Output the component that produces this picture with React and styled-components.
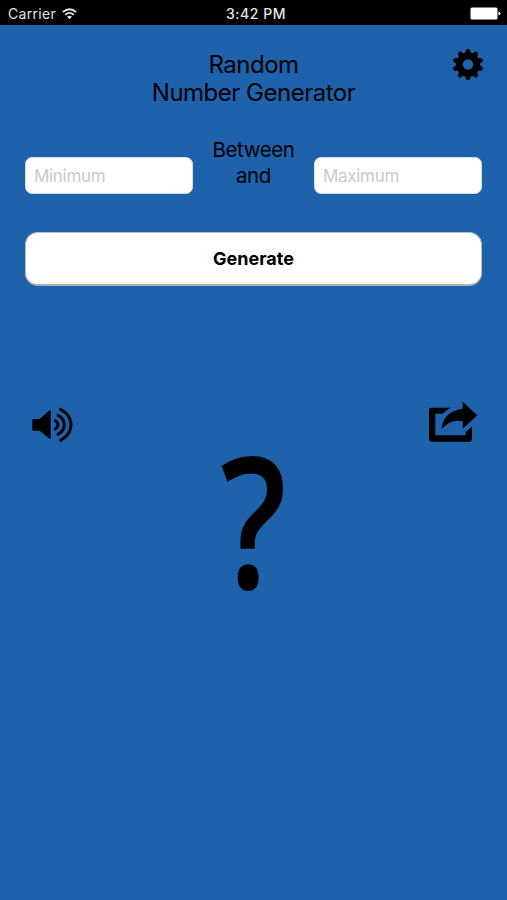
import React, { useState } from 'react';
import styled, { createGlobalStyle } from 'styled-components';

const GlobalStyle = createGlobalStyle`
  * {
    box-sizing: border-box;
  }

  body {
    margin: 0;
    background-color: #1d62ab;
    font-family: Inter, 'Liberation Sans', sans-serif;
    color: #000;
  }
`;

// Screen
const Screen = styled.div`
  display: flex;
  flex-direction: column;
  height: 900px;
  background-color: #1d62ab;
`;

// Status Bar
const StatusBar = styled.header`
  display: grid;
  grid-template-columns: 1fr auto 1fr;
  align-items: center;
  height: 25px;
  padding: 2px 6px 0 8px;
  background-color: #000;
  color: #e4e4e4;
  font-size: 14px;
  line-height: 17px;
`;

const Carrier = styled.div`
  display: flex;
  align-items: center;
  gap: 6px;
  letter-spacing: 0.3px;
`;

const Clock = styled.div`
  font-weight: 500;
  font-size: 14px;
  letter-spacing: 0.5px;
  margin-left: 3px;
`;

const Battery = styled.svg`
  justify-self: end;
`;

// Title row
const TopBar = styled.div`
  display: grid;
  grid-template-columns: 1fr auto 1fr;
  align-items: start;
  height: 112px;
  padding: 23px 23px 0;
`;

const Title = styled.h1`
  grid-column: 2;
  margin: 3px 0 0;
  font-size: 24px;
  font-weight: 400;
  line-height: 28px;
  letter-spacing: -0.5px;
  text-align: center;
`;

// Icon Button
const IconButton = styled.button`
  display: flex;
  padding: 0;
  background: none;
  border: none;
  color: inherit;
  cursor: pointer;
`;

const SettingsButton = styled(IconButton)`
  justify-self: end;
`;

// Range row
const RangeRow = styled.div`
  display: flex;
  justify-content: space-between;
  align-items: flex-start;
  height: 95px;
  padding: 0 25px;
`;

const RangeLabel = styled.div`
  font-size: 20.5px;
  line-height: 26px;
  letter-spacing: -0.4px;
  text-align: center;
`;

// Input
const Input = styled.input`
  width: 168px;
  height: 37px;
  margin-top: 20px;
  padding: 0 8px;
  border: 1px solid #d5dce6;
  border-radius: 7px;
  background-color: #fff;
  font-family: inherit;
  font-size: 17px;
  letter-spacing: -0.3px;

  &::placeholder {
    color: #c9c9ce;
    opacity: 1;
  }
`;

// Generate Button
const GenerateButton = styled.button`
  height: 54px;
  margin: 0 25px;
  border: 1px solid #b9c0c9;
  border-bottom: 2px solid #b0b3b6;
  border-radius: 13px;
  background-color: #fff;
  color: #000;
  font-family: inherit;
  font-size: 18px;
  font-weight: 700;
  cursor: pointer;
`;

// Sound and share
const ActionRow = styled.div`
  display: flex;
  justify-content: space-between;
  height: 42px;
  margin-top: 115px;
  padding: 0 29px 0 31px;
`;

// Result
const Result = styled.output`
  height: 180px;
  font-family: 'Open Sans', 'Noto Sans', sans-serif;
  font-size: 183px;
  font-weight: 600;
  line-height: 150px;
  text-align: center;
  transform: scaleX(0.8);
`;

const teeth = [0, 36, 72, 108, 144, 180, 216, 252, 288, 324];

function GearIcon() {
  return (
    <svg width="32" height="33" viewBox="-16 -16.5 32 33">
      <circle r="8.7" fill="none" stroke="currentColor" strokeWidth="7" />
      {teeth.map((angle) => (
        <path
          key={angle}
          d="M-2.8 -11L-2 -14.4Q-1.7 -15.5 0 -15.5T2 -14.4L2.8 -11Z"
          fill="currentColor"
          transform={`rotate(${angle})`}
        />
      ))}
    </svg>
  );
}

function WifiIcon() {
  return (
    <svg width="15" height="12" viewBox="0 0 15 12" fill="none" stroke="currentColor" strokeWidth="1.8">
      <path d="M0.8 4.2Q7.5 -1.8 14.2 4.2" />
      <path d="M3.2 6.8Q7.5 3 11.8 6.8" />
      <path d="M7.5 11.2L5 8.7Q7.5 6.6 10 8.7Z" fill="currentColor" stroke="none" />
    </svg>
  );
}

function SpeakerIcon() {
  return (
    <svg width="42" height="42" viewBox="48 33 126 126">
      <path
        d="M55 87H74L102 62Q107 59 107 64V143Q107 149 102 145L74 122H55Q52 122 52 119V90Q52 87 55 87Z"
        fill="currentColor"
      />
      <g fill="none" stroke="currentColor" strokeWidth="9" strokeLinecap="round">
        <path d="M121 92Q129 97 129 104.5T121 117" />
        <path d="M129 76Q148 86 148 104.5T129 133" />
        <path d="M137 58Q168 75 168 104.5T137 151" />
      </g>
    </svg>
  );
}

function ShareIcon() {
  return (
    <svg width="50" height="42" viewBox="40 33 150 126" fill="currentColor">
      <path d="M50 53H109Q94 60 83 71H62V136H153V127L172 109V148Q172 155 165 155H50Q43 155 43 148V60Q43 53 50 53Z" />
      <path d="M144 35L188 76L144 116V94Q107 85 81 118Q84 65 144 56Z" />
    </svg>
  );
}

function App() {
  const [min, setMin] = useState('');
  const [max, setMax] = useState('');
  const [result, setResult] = useState('?');

  const handleGenerate = () => {
    const low = Number(min);
    const high = Number(max);
    if (min === '' || max === '' || low > high) return;
    setResult(Math.floor(Math.random() * (high - low + 1)) + low);
  };

  return (
    <>
      <GlobalStyle />
      <Screen>
        <StatusBar>
          <Carrier>
            Carrier <WifiIcon />
          </Carrier>
          <Clock>3:42 PM</Clock>
          <Battery width="31" height="13" viewBox="0 0 31 13" fill="#fff">
            <rect x="0.5" y="0.5" width="27" height="12" rx="1.5" />
            <path d="M28.5 4.5Q30.5 5 30.5 6.5T28.5 8.5Z" />
          </Battery>
        </StatusBar>
        <TopBar>
          <Title>
            Random
            <br />
            Number Generator
          </Title>
          <SettingsButton>
            <GearIcon />
          </SettingsButton>
        </TopBar>
        <RangeRow>
          <Input placeholder="Minimum" value={min} onChange={(e) => setMin(e.target.value)} />
          <RangeLabel>
            Between
            <br />
            and
          </RangeLabel>
          <Input placeholder="Maximum" value={max} onChange={(e) => setMax(e.target.value)} />
        </RangeRow>
        <GenerateButton onClick={handleGenerate}>Generate</GenerateButton>
        <ActionRow>
          <IconButton>
            <SpeakerIcon />
          </IconButton>
          <IconButton>
            <ShareIcon />
          </IconButton>
        </ActionRow>
        <Result>{result}</Result>
      </Screen>
    </>
  );
}

export default App;
